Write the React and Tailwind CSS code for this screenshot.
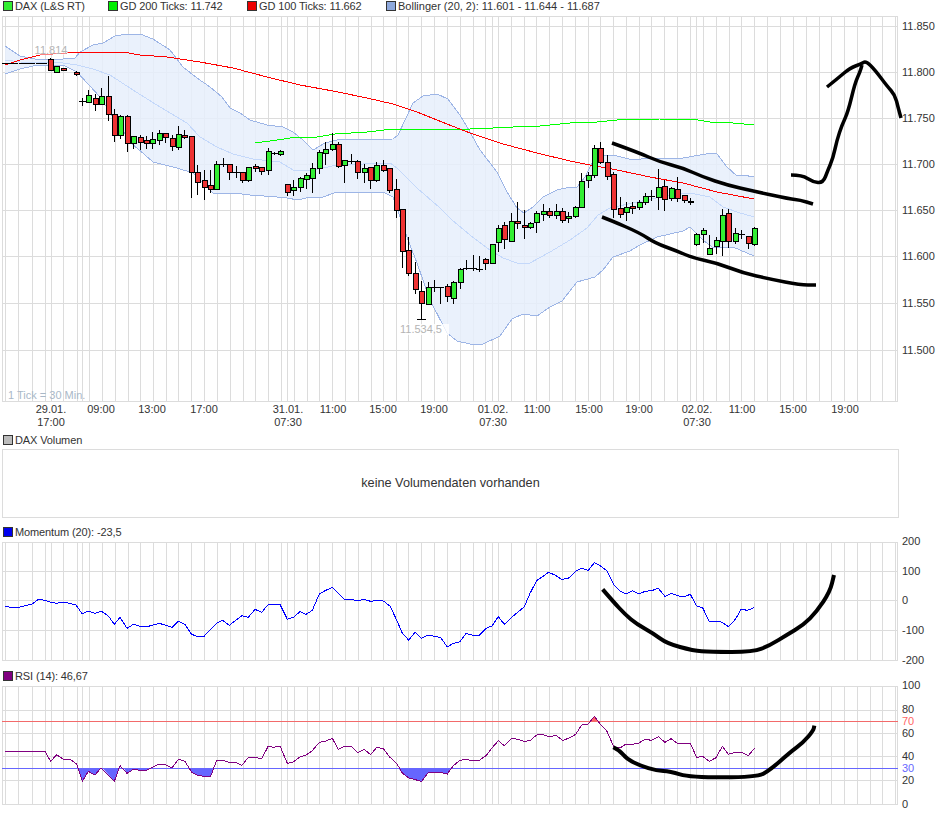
import React from "react";

// Vertical grid is shared by all three chart panels
const gridX = [2, 5, 18, 32, 45, 51, 63, 77, 82, 89, 102, 115, 128, 140, 153, 166, 178, 191, 204, 217, 230, 243, 255, 268, 281, 287, 294, 307, 319, 332, 345, 358, 371, 383, 396, 408, 421, 434, 447, 460, 473, 485, 492, 498, 511, 524, 536, 549, 562, 575, 588, 600, 613, 626, 639, 651, 664, 677, 690, 696, 703, 716, 729, 741, 754, 767, 780, 793, 806, 819, 831, 844, 857, 870, 882, 895, 897];

// [x, body top, body bottom, wick high, wick low, type]
const candles = [
  [50, 59, 70, 58, 70, "r"], [56, 66, 72, 66, 72, "g"], [63, 68, 70, 68, 70, "r"], [76, 72, 74, 71, 75, "r"],
  [82, 101, 101, 98, 105, "d"], [88, 95, 102, 90, 102, "g"], [95, 98, 104, 94, 110, "r"], [101, 96, 104, 88, 104, "g"],
  [108, 96, 114, 76, 120, "r"], [114, 114, 135, 109, 141, "r"], [120, 116, 135, 115, 138, "g"], [127, 116, 143, 115, 151, "r"],
  [133, 136, 143, 136, 148, "g"], [140, 137, 142, 135, 149, "r"], [146, 140, 143, 136, 148, "r"], [152, 139, 143, 132, 148, "g"],
  [159, 133, 140, 130, 144, "g"], [165, 133, 137, 133, 142, "r"], [172, 138, 146, 135, 150, "r"], [178, 134, 147, 126, 149, "g"],
  [184, 135, 137, 130, 138, "r"], [191, 136, 172, 136, 197, "r"], [197, 172, 182, 165, 194, "r"], [204, 180, 187, 170, 199, "r"],
  [210, 185, 189, 170, 192, "r"], [216, 164, 189, 161, 189, "g"], [223, 164, 164, 158, 166, "d"], [229, 164, 172, 164, 179, "r"],
  [236, 172, 172, 166, 177, "d"], [242, 172, 180, 172, 182, "r"], [248, 167, 180, 167, 181, "g"], [255, 166, 168, 164, 171, "r"],
  [261, 167, 171, 167, 174, "r"], [268, 151, 170, 148, 174, "g"], [274, 153, 153, 152, 154, "d"], [280, 151, 154, 150, 155, "g"],
  [287, 184, 192, 184, 195, "r"], [293, 187, 190, 180, 195, "g"], [300, 178, 187, 177, 191, "g"], [306, 175, 179, 173, 188, "g"],
  [312, 168, 178, 163, 192, "g"], [319, 152, 168, 150, 173, "g"], [325, 149, 153, 142, 164, "g"], [332, 144, 149, 133, 150, "g"],
  [338, 144, 166, 142, 167, "r"], [344, 160, 165, 160, 182, "g"], [351, 161, 161, 154, 163, "d"], [357, 161, 172, 160, 178, "r"],
  [364, 168, 172, 164, 182, "g"], [370, 167, 180, 167, 188, "r"], [376, 165, 180, 162, 181, "g"], [383, 165, 170, 160, 171, "r"],
  [389, 168, 190, 168, 192, "r"], [396, 189, 210, 179, 217, "r"], [402, 209, 251, 209, 267, "r"], [408, 250, 273, 237, 275, "r"],
  [415, 273, 289, 262, 293, "r"], [421, 291, 303, 281, 319, "r"], [428, 287, 304, 282, 304, "g"], [434, 287, 287, 280, 291, "d"],
  [440, 287, 287, 287, 303, "d"], [447, 286, 296, 284, 301, "r"], [453, 282, 298, 281, 303, "g"], [460, 269, 282, 268, 288, "g"],
  [466, 268, 268, 260, 269, "d"], [473, 268, 268, 255, 270, "d"], [479, 269, 269, 256, 271, "d"], [485, 259, 263, 258, 269, "r"],
  [492, 244, 263, 244, 263, "g"], [498, 228, 242, 225, 251, "g"], [504, 225, 239, 222, 248, "r"], [511, 221, 241, 213, 241, "g"],
  [517, 221, 223, 202, 228, "r"], [524, 225, 227, 210, 238, "r"], [530, 223, 227, 222, 228, "g"], [536, 213, 222, 211, 232, "g"],
  [543, 211, 214, 204, 220, "g"], [549, 211, 215, 208, 217, "r"], [556, 211, 215, 204, 218, "g"], [562, 211, 220, 208, 222, "r"],
  [568, 216, 218, 212, 222, "g"], [575, 207, 216, 206, 217, "g"], [581, 181, 207, 173, 207, "g"], [588, 175, 180, 172, 187, "g"],
  [594, 148, 175, 145, 177, "g"], [600, 148, 162, 142, 163, "r"], [607, 162, 176, 155, 179, "r"], [613, 174, 209, 172, 217, "r"],
  [620, 208, 214, 197, 217, "r"], [626, 207, 212, 202, 220, "g"], [632, 206, 208, 202, 213, "r"], [639, 202, 207, 200, 209, "g"],
  [645, 196, 202, 193, 204, "g"], [651, 196, 196, 190, 200, "d"], [658, 187, 197, 169, 209, "g"], [664, 186, 199, 180, 210, "r"],
  [671, 188, 198, 187, 200, "g"], [677, 189, 198, 177, 201, "r"], [684, 195, 200, 195, 202, "r"], [690, 201, 202, 198, 204, "g"],
  [696, 234, 244, 233, 245, "g"], [703, 230, 234, 228, 242, "g"], [709, 248, 254, 235, 254, "g"], [716, 240, 246, 237, 253, "g"],
  [722, 215, 241, 209, 255, "g"], [728, 213, 241, 209, 247, "r"], [735, 233, 241, 228, 243, "g"], [741, 234, 234, 230, 238, "d"],
  [748, 236, 243, 236, 248, "r"], [754, 228, 244, 227, 245, "g"],
];

const bollUpper = [[5, 46], [20, 56], [35, 59], [63, 59], [75, 58], [80, 52], [93, 45], [103, 43], [115, 36], [127, 34], [140, 34], [153, 39], [170, 50], [183, 67], [197, 78], [210, 87], [222, 97], [230, 108], [240, 113], [250, 120], [267, 125], [283, 127], [293, 132], [303, 140], [313, 150], [325, 143], [337, 140], [393, 139], [398, 135], [413, 103], [423, 96], [437, 94], [448, 99], [460, 115], [470, 132], [480, 150], [497, 172], [507, 192], [517, 208], [524, 213], [533, 207], [543, 197], [557, 190], [570, 187], [577, 187], [585, 177], [592, 163], [603, 155], [613, 155], [633, 160], [650, 158], [683, 158], [700, 155], [712, 153], [717, 154], [727, 167], [737, 176], [743, 175], [754, 177]];
const bollLower = [[5, 74], [20, 69], [33, 66], [63, 65], [77, 72], [100, 97], [115, 120], [133, 145], [137, 148], [153, 162], [177, 168], [193, 173], [213, 193], [233, 193], [250, 195], [277, 197], [287, 198], [298, 200], [310, 197], [323, 197], [337, 192], [383, 192], [393, 197], [408, 240], [417, 263], [430, 300], [447, 333], [457, 341], [470, 344], [483, 344], [500, 336], [512, 319], [523, 314], [537, 316], [550, 307], [562, 301], [577, 282], [595, 277], [603, 270], [613, 257], [630, 251], [640, 245], [657, 237], [683, 231], [690, 227], [703, 240], [712, 247], [733, 247], [754, 256]];
const bollMid = [[5, 60], [20, 62], [63, 63], [77, 65], [93, 69], [110, 75], [133, 90], [160, 107], [187, 123], [200, 137], [217, 147], [233, 154], [253, 159], [280, 162], [293, 170], [307, 171], [323, 168], [337, 165], [390, 163], [397, 168], [417, 188], [440, 208], [452, 220], [470, 235], [487, 248], [503, 258], [517, 263], [530, 263], [550, 252], [570, 240], [587, 228], [598, 215], [610, 208], [637, 202], [670, 195], [690, 193], [710, 197], [723, 207], [737, 212], [754, 217]];
const ma100 = [[5, 65], [20, 60], [40, 55], [67, 53], [80, 52], [123, 52], [140, 55], [167, 57], [200, 62], [233, 68], [267, 77], [300, 85], [333, 91], [367, 98], [393, 104], [417, 112], [447, 124], [470, 133], [503, 144], [537, 153], [570, 161], [590, 165], [617, 170], [650, 177], [683, 183], [717, 192], [754, 199]];
const ma200 = [[255, 143], [277, 140], [297, 137], [317, 137], [335, 134], [367, 132], [393, 129], [470, 129], [493, 128], [513, 127], [540, 126], [570, 123], [597, 122], [617, 120], [660, 119], [692, 119], [710, 122], [733, 123], [754, 125]];

// Hand drawn marks on top of the price chart
const inkMain = [
  [[612, 143], [637, 152], [660, 162], [683, 168], [703, 177], [727, 185], [753, 191], [790, 199], [800, 200], [813, 204]],
  [[791, 175], [802, 175], [813, 182], [823, 183], [828, 170], [833, 158], [837, 140], [842, 125], [848, 112], [855, 83], [860, 72], [862, 65]],
  [[827, 87], [837, 79], [850, 68], [861, 64], [866, 61], [875, 70], [887, 86], [895, 95], [898, 107], [901, 118]],
  [[602, 217], [610, 220], [640, 233], [655, 243], [677, 251], [693, 258], [717, 263], [743, 273], [770, 279], [800, 285], [816, 285]],
];

// Indicator data below is read at 3x, so zoomed coordinates get scaled back
const scale = (pts, ox, oy) => pts.map(([x, y]) => [ox + x / 3, oy + y / 3]);
const toPoints = (pts) => pts.map(([x, y]) => `${x},${y}`).join(" ");

// Smooth a freehand stroke through the midpoints of its segments
const toCurve = (pts) => {
  let d = `M${pts[0][0]} ${pts[0][1]}`;
  for (let i = 1; i < pts.length - 1; i++) {
    const mx = (pts[i][0] + pts[i + 1][0]) / 2;
    const my = (pts[i][1] + pts[i + 1][1]) / 2;
    d += ` Q${pts[i][0]} ${pts[i][1]} ${mx} ${my}`;
  }
  const last = pts[pts.length - 1];
  return `${d} L${last[0]} ${last[1]}`;
};

const momentumLine = [
  ...scale([[15, 258], [30, 262], [58, 262], [75, 257], [95, 253], [115, 238], [135, 241], [152, 247], [170, 250], [190, 246], [210, 250], [228, 255], [247, 282], [265, 273], [285, 280], [305, 274], [325, 288], [343, 313], [360, 292], [381, 325], [400, 313], [420, 319], [445, 319], [478, 310], [497, 316], [516, 322], [535, 304], [555, 313], [575, 343], [592, 349], [612, 349], [630, 330], [650, 310], [668, 301], [688, 316], [708, 300], [726, 287], [745, 292], [765, 268], [785, 277], [805, 253], [840, 253], [862, 298], [880, 292], [900, 275], [918, 283], [937, 271], [958, 222], [975, 212], [997, 202], [1033, 238], [1055, 238], [1072, 243], [1092, 238], [1112, 244], [1130, 241], [1150, 243], [1170, 258], [1190, 300], [1207, 340], [1226, 360], [1245, 337], [1265, 355], [1285, 345], [1303, 349], [1322, 353], [1342, 381], [1360, 370], [1380, 365], [1398, 341], [1410, 343]], 0, 520),
  ...scale([[10, 346], [28, 346], [48, 325], [66, 318], [85, 290], [103, 313], [125, 292], [145, 275], [163, 260], [180, 220], [200, 182], [215, 172], [235, 157], [255, 165], [275, 178], [295, 175], [318, 153], [335, 145], [355, 151], [373, 128], [390, 137], [410, 152], [432, 195], [450, 213], [467, 222], [487, 212], [507, 222], [525, 214], [545, 212], [565, 205], [585, 229], [603, 220], [620, 226], [640, 231], [661, 223], [680, 258], [698, 263], [718, 306], [738, 303], [757, 307], [775, 320], [797, 297], [813, 268], [833, 271], [853, 262]], 470, 520),
];
const momentumInk = scale([[398, 208], [430, 245], [465, 283], [500, 312], [550, 340], [590, 370], [670, 392], [720, 396], [850, 396], [900, 376], [950, 345], [1000, 315], [1040, 275], [1080, 215], [1092, 165]], 470, 520);

const rsiLine = [
  ...scale([[15, 262], [135, 262], [152, 292], [170, 272], [190, 286], [210, 286], [230, 300], [247, 352], [265, 322], [285, 333], [303, 312], [343, 352], [360, 305], [381, 328], [400, 316], [420, 319], [440, 319], [478, 300], [497, 302], [516, 312], [535, 286], [555, 292], [575, 325], [592, 333], [612, 337], [632, 337], [650, 289], [668, 289], [688, 295], [708, 295], [726, 304], [745, 280], [765, 280], [785, 284], [805, 246], [820, 250], [840, 246], [862, 298], [880, 294], [900, 279], [918, 273], [937, 260], [958, 235], [975, 232], [997, 223], [1015, 256], [1033, 247], [1055, 247], [1072, 266], [1092, 256], [1112, 272], [1130, 250], [1150, 254], [1170, 280], [1190, 298], [1207, 327], [1226, 342], [1265, 352], [1285, 325], [1322, 325], [1342, 330], [1360, 305], [1380, 289], [1398, 286], [1410, 289]], 0, 664),
  ...scale([[28, 289], [48, 275], [66, 252], [85, 230], [103, 245], [125, 223], [145, 226], [163, 232], [180, 230], [200, 213], [218, 211], [237, 219], [258, 214], [278, 229], [298, 222], [317, 211], [335, 183], [355, 180], [373, 157], [390, 180], [410, 200], [432, 250], [450, 252], [467, 241], [487, 241], [507, 237], [525, 226], [545, 229], [565, 218], [585, 235], [603, 224], [622, 238], [661, 238], [680, 280], [698, 277], [718, 292], [738, 281], [757, 247], [775, 271], [795, 265], [815, 265], [835, 275], [853, 253]], 470, 664),
];
const rsiBelow = [
  [[234, 313], [247, 352], [265, 322], [285, 333], [303, 313]],
  [[308, 313], [343, 352], [356, 313]],
  [[372, 313], [381, 328], [400, 316], [420, 319], [440, 319], [452, 313]],
  [[568, 313], [575, 325], [592, 333], [612, 337], [632, 337], [640, 313]],
  [[1195, 313], [1207, 327], [1226, 342], [1265, 352], [1285, 325], [1322, 325], [1342, 330], [1352, 313]],
].map((p) => scale(p, 0, 664));
const rsiAbove = scale([[362, 172], [373, 157], [385, 172]], 470, 664);
const rsiInk = scale([[430, 250], [450, 260], [470, 285], [510, 305], [560, 320], [600, 322], [660, 340], [860, 340], [900, 318], [960, 265], [1000, 235], [1030, 200], [1033, 185]], 470, 664);

const priceTicks = [["11.850", 26], ["11.800", 72], ["11.750", 118], ["11.700", 164], ["11.650", 210], ["11.600", 256], ["11.550", 303], ["11.500", 350]];
const timeLabels = [
  [51, "29.01.", "17:00"], [101, "09:00"], [152, "13:00"], [204, "17:00"], [288, "31.01.", "07:30"], [333, "11:00"], [383, "15:00"], [434, "19:00"],
  [493, "01.02.", "07:30"], [537, "11:00"], [589, "15:00"], [639, "19:00"], [697, "02.02.", "07:30"], [742, "11:00"], [793, "15:00"], [845, "19:00"],
];

const Legend = ({ color, children, className = "" }) => (
  <div className={`flex items-center gap-[2px] pl-[3px] leading-[12px] ${className}`}>
    <span className="w-[10px] h-[10px] border border-[#333] shrink-0" style={{ backgroundColor: color }} />
    <span className="whitespace-nowrap">{children}</span>
  </div>
);

// Frame plus horizontal and vertical grid lines, drawn in page coordinates
const Grid = ({ top, bottom, rows }) => (
  <g stroke="#dcdcdc" strokeWidth="1" shapeRendering="crispEdges">
    {gridX.map((x) => (
      <line key={x} x1={x + 0.5} x2={x + 0.5} y1={top} y2={bottom + 1} />
    ))}
    {rows.map((y) => (
      <line key={y} x1="2" x2="898" y1={y + 0.5} y2={y + 0.5} />
    ))}
  </g>
);

const Candle = ({ c }) => {
  const [x, top, bottom, hi, lo, type] = c;
  return (
    <g shapeRendering="crispEdges">
      <line x1={x + 0.5} x2={x + 0.5} y1={hi} y2={lo + 1} stroke="#000" />
      {type === "d" ? (
        <line x1={x - 3} x2={x + 4} y1={top + 0.5} y2={top + 0.5} stroke="#000" />
      ) : (
        <rect x={x - 1.5} y={top + 0.5} width="5" height={bottom - top} fill={type === "g" ? "#33ee33" : "#ee3333"} stroke="#000" />
      )}
    </g>
  );
};

const AxisLabels = ({ ticks }) =>
  ticks.map(([label, y, color]) => (
    <text key={label} x="902" y={y + 4} fill={color || "#333"} className="text-[11px]">
      {label}
    </text>
  ));

const Ink = ({ points, width = 3.5 }) => (
  <path d={toCurve(points)} fill="none" stroke="#000" strokeWidth={width} strokeLinejoin="round" />
);

const Line = ({ points, color }) => (
  <polyline points={toPoints(points)} fill="none" stroke={color} shapeRendering="crispEdges" />
);

const PriceChart = () => (
  <svg width="940" height="416" viewBox="0 16 940 416" className="block overflow-visible">
    <Grid top={16} bottom={401} rows={[16, 26, 72, 118, 164, 210, 256, 303, 350, 401]} />
    <polygon points={toPoints([...bollUpper, ...[...bollLower].reverse()])} fill="#e6eefc" fillOpacity="0.85" />
    <Line points={bollMid} color="#c4d8fa" />
    <Line points={bollUpper} color="#9db5e6" />
    <Line points={bollLower} color="#9db5e6" />
    <Line points={ma200} color="#00ff00" />
    <Line points={ma100} color="#ff0000" />
    <line x1="2" x2="47" y1="63.5" y2="63.5" stroke="#000" strokeDasharray="16 1" shapeRendering="crispEdges" />
    {candles.map((c) => (
      <Candle key={c[0]} c={c} />
    ))}
    <line x1="417" x2="426" y1="319.5" y2="319.5" stroke="#000" shapeRendering="crispEdges" />
    {inkMain.map((p, i) => (
      <Ink key={i} points={p} />
    ))}
    <rect x="33" y="45" width="35" height="10" fill="#fff" fillOpacity="0.5" />
    <text x="51" y="54" textAnchor="middle" fill="#b4b4b4" className="text-[11px]">11.814</text>
    <rect x="399" y="324" width="50" height="11" fill="#fff" fillOpacity="0.8" />
    <text x="421" y="333" textAnchor="middle" fill="#b4b4b4" className="text-[11px]">11.534,5</text>
    <text x="8" y="399" fill="#a9b8c8" className="text-[11px]">1 Tick = 30 Min.</text>
    <AxisLabels ticks={priceTicks} />
    {timeLabels.map(([x, a, b]) => (
      <text key={x} textAnchor="middle" fill="#333" className="text-[11px]">
        <tspan x={x} y="413">{a}</tspan>
        {b && <tspan x={x} y="426">{b}</tspan>}
      </text>
    ))}
  </svg>
);

const MomentumChart = () => (
  <svg width="940" height="121" viewBox="0 541 940 121" className="block overflow-visible">
    <Grid top={542} bottom={660} rows={[542, 571, 600, 630, 660]} />
    <Line points={momentumLine} color="#0000ff" />
    <Ink points={momentumInk} width={4} />
    <AxisLabels ticks={[["200", 541], ["100", 571], ["0", 600], ["-100", 630], ["-200", 660]]} />
  </svg>
);

const RsiChart = () => (
  <svg width="940" height="129" viewBox="0 685 940 129" className="block overflow-visible">
    <Grid top={686} bottom={804} rows={[686, 710, 733, 756, 780, 804]} />
    {rsiBelow.map((p, i) => (
      <polygon key={i} points={toPoints(p)} fill="#6666ff" />
    ))}
    <polygon points={toPoints(rsiAbove)} fill="#ff6666" />
    <line x1="2" x2="898" y1="721.5" y2="721.5" stroke="#f26a6a" shapeRendering="crispEdges" />
    <line x1="2" x2="898" y1="768.5" y2="768.5" stroke="#6666ff" shapeRendering="crispEdges" />
    <Line points={rsiLine} color="#800080" />
    <Ink points={rsiInk} width={4} />
    <AxisLabels ticks={[["100", 685], ["80", 709], ["70", 721, "#ff6666"], ["60", 733], ["40", 756], ["30", 768, "#6666ff"], ["20", 780], ["0", 804]]} />
  </svg>
);

export default function App() {
  return (
    <div className="w-[940px] h-[814px] bg-white overflow-hidden font-['Liberation_Sans',Arial,sans-serif] text-[11px] text-[#333]">
      <div className="flex h-[16px] items-start tracking-[-0.12px]">
        <Legend color="#33ee33" className="w-[105px]">DAX (L&amp;S RT)</Legend>
        <Legend color="#00ee00" className="w-[139px]">GD 200 Ticks: 11.742</Legend>
        <Legend color="#ee0000" className="w-[139px]">GD 100 Ticks: 11.662</Legend>
        <Legend color="#8ea8dc" className="tracking-normal">Bollinger (20, 2): 11.601 - 11.644 - 11.687</Legend>
      </div>
      <PriceChart />
      <div className="h-[15px] mb-[2px] flex items-center tracking-[-0.12px]">
        <Legend color="#bbbbbb">DAX Volumen</Legend>
      </div>
      <div className="ml-[2px] w-[897px] h-[69px] pt-[1px] border border-[#dcdcdc] flex items-center justify-center text-[12.7px]">
        keine Volumendaten vorhanden
      </div>
      <div className="h-[23px] flex items-center pt-[5px] tracking-[-0.12px]">
        <Legend color="#0000ee">Momentum (20): -23,5</Legend>
      </div>
      <MomentumChart />
      <div className="h-[23px] flex items-center pt-[5px] tracking-[-0.12px]">
        <Legend color="#800080">RSI (14): 46,67</Legend>
      </div>
      <RsiChart />
    </div>
  );
}
